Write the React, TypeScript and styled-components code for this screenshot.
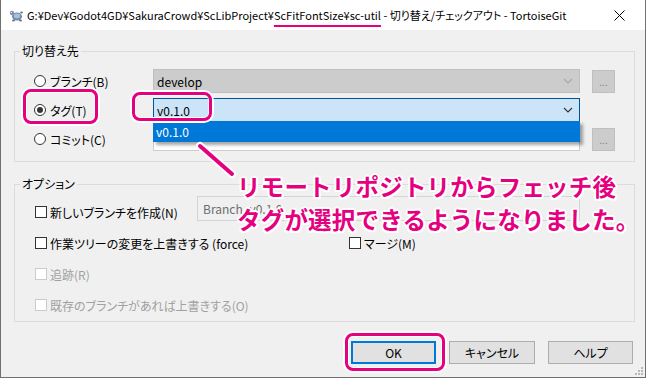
import React from "react";
import styled, { createGlobalStyle } from "styled-components";

const PINK = "#e4007f";

const GlobalStyle = createGlobalStyle`
  html, body {
    margin: 0;
    padding: 0;
    background: #ffffff;
  }
  body {
    font-family: "Noto Sans CJK JP", "Noto Sans", sans-serif;
    font-size: 12px;
    font-feature-settings: "palt";
    color: #000;
  }
`;

const Window = styled.div`
  position: relative;
  width: 646px;
  height: 378px;
  box-sizing: border-box;
  border: 1px solid #707070;
  border-top: none;
  background: #f0f0f0;
  display: flex;
  flex-direction: column;
`;

const TitleBar = styled.div`
  height: 30px;
  flex: none;
  background: #ffffff;
  display: flex;
  align-items: center;
  padding: 0 20px 0 8px;
  & > svg {
    flex: none;
  }
`;

const TitleText = styled.div`
  flex: 1;
  min-width: 0;
  margin-left: 3px;
  font-size: 11px;
  color: #000;
  white-space: nowrap;
`;

const Marked = styled.span`
  text-decoration: underline;
  text-decoration-color: ${PINK};
  text-decoration-thickness: 2px;
  text-underline-offset: 5px;
`;

const Body = styled.div`
  flex: 1;
  display: flex;
  flex-direction: column;
  padding: 13px 10px 0 13px;
`;

const Group = styled.fieldset<{ $gap?: number }>`
  margin: ${(p) => p.$gap ?? 0}px 0 0 0;
  padding: 0;
  border: 1px solid #dcdcdc;
  min-width: 0;
`;

const Legend = styled.legend`
  margin-left: 5px;
  padding: 0 2px;
  font-size: 12px;
  line-height: 16px;
  color: #000;
`;

const TargetGrid = styled.div`
  display: grid;
  grid-template-columns: 119px 427px 35px;
  grid-auto-rows: 24px;
  row-gap: 5px;
  padding: 10px 0 10px 19px;
  align-items: center;
`;

const Choice = styled.label<{ $disabled?: boolean }>`
  display: flex;
  align-items: center;
  gap: 4px;
  height: 24px;
  white-space: nowrap;
  color: ${(p) => (p.$disabled ? "#a0a0a0" : "#000")};
`;

const RadioMark = styled.span<{ $on?: boolean }>`
  width: 12px;
  height: 12px;
  box-sizing: border-box;
  border: 1px solid #333;
  border-radius: 50%;
  background: #fff;
  display: flex;
  align-items: center;
  justify-content: center;
  &::after {
    content: "";
    width: 6px;
    height: 6px;
    border-radius: 50%;
    background: ${(p) => (p.$on ? "#333" : "transparent")};
  }
`;

const CheckMark = styled.span<{ $disabled?: boolean }>`
  width: 12px;
  height: 12px;
  box-sizing: border-box;
  border: 1px solid ${(p) => (p.$disabled ? "#cccccc" : "#333")};
  background: #fff;
  margin-right: -1px;
`;

const ComboCell = styled.div`
  position: relative;
  height: 100%;
`;

const Combo = styled.div<{ $state: "disabled" | "focus" | "plain" }>`
  height: 100%;
  box-sizing: border-box;
  display: flex;
  align-items: center;
  justify-content: space-between;
  padding: 0 6px 0 3px;
  border: 1px solid
    ${(p) => (p.$state === "focus" ? "#005499" : p.$state === "disabled" ? "#bfbfbf" : "#cccccc")};
  background: ${(p) => (p.$state === "focus" ? "#cce4f7" : p.$state === "disabled" ? "#cccccc" : "#ffffff")};
  color: #000;
`;

const Chevron = ({ color }: { color: string }) => (
  <svg width="10" height="6" viewBox="0 0 10 6">
    <path d="M1 1 L5 5 L9 1" fill="none" stroke={color} strokeWidth="1.1" />
  </svg>
);

const DropList = styled.div`
  position: absolute;
  left: 0;
  right: 0;
  top: 23px;
  height: 21px;
  background: #0078d7;
  color: #fff;
  display: flex;
  align-items: center;
  padding-left: 3px;
  box-shadow: 3px 3px 3px rgba(0, 0, 0, 0.35);
  z-index: 2;
`;

const DotsButton = styled.div`
  margin-left: 12px;
  height: 23px;
  box-sizing: border-box;
  border: 1px solid #bfbfbf;
  background: #cccccc;
  color: #838383;
  font-size: 10px;
  display: flex;
  align-items: center;
  justify-content: center;
`;

const OptionList = styled.div`
  display: flex;
  flex-direction: column;
  gap: 7px;
  padding: 4px 0 4px 20px;
`;

const OptionRow = styled.div`
  display: flex;
  align-items: flex-start;
`;

const OptionCell = styled.div<{ $w?: number; $top?: number }>`
  width: ${(p) => (p.$w ? `${p.$w}px` : "auto")};
  margin-top: ${(p) => p.$top ?? 0}px;
  flex: none;
`;

const BranchField = styled.div`
  width: 383px;
  height: 25px;
  box-sizing: border-box;
  border: 1px solid #d4d4d4;
  background: #f0f0f0;
  color: #6d6d6d;
  display: flex;
  align-items: center;
  padding-left: 5px;
`;

const ButtonBar = styled.div`
  display: flex;
  justify-content: flex-end;
  gap: 13px;
  margin-top: 19px;
  padding-right: 2px;
`;

const DialogButton = styled.div<{ $primary?: boolean; $w: number }>`
  width: ${(p) => p.$w}px;
  height: 23px;
  box-sizing: border-box;
  border: ${(p) => (p.$primary ? "2px solid #0078d7" : "1px solid #adadad")};
  background: #e1e1e1;
  display: flex;
  align-items: center;
  justify-content: center;
  color: #000;
`;

const Highlight = styled.div`
  position: absolute;
  box-sizing: border-box;
  border: 3px solid ${PINK};
  border-radius: 8px;
  box-shadow: 0 0 0 2px #fff, inset 0 0 0 1px #fff;
  z-index: 3;
`;

const Callout = styled.div`
  position: absolute;
  left: 236px;
  top: 170px;
  z-index: 4;
  font-family: "Noto Sans CJK JP", sans-serif;
  font-feature-settings: normal;
  font-weight: 700;
  font-size: 23.5px;
  line-height: 33px;
  letter-spacing: 0.2px;
  color: ${PINK};
  white-space: nowrap;
  text-shadow: 2px 0 0 #fff, -2px 0 0 #fff, 0 2px 0 #fff, 0 -2px 0 #fff, 1.5px 1.5px 0 #fff, -1.5px 1.5px 0 #fff,
    1.5px -1.5px 0 #fff, -1.5px -1.5px 0 #fff;
`;

const Pointer = styled.svg`
  position: absolute;
  left: 190px;
  top: 138px;
  z-index: 4;
`;

const Grip = styled.svg`
  position: absolute;
  right: 2px;
  bottom: 2px;
`;

const TurtleIcon = () => (
  <svg width="15" height="15" viewBox="0 0 15 15">
    <ellipse cx="8" cy="8.5" rx="5" ry="4" fill="#6f8aa6" />
    <ellipse cx="8" cy="8" rx="3.2" ry="2.4" fill="#a9bfd4" />
    <circle cx="3" cy="5" r="2.2" fill="#7d95ae" />
    <circle cx="2.4" cy="4.5" r="0.6" fill="#fff" />
    <ellipse cx="4.5" cy="12.5" rx="1.5" ry="1" fill="#5d7690" />
    <ellipse cx="11.5" cy="12.5" rx="1.5" ry="1" fill="#5d7690" />
    <ellipse cx="12.5" cy="4.5" rx="1.4" ry="1" fill="#5d7690" />
  </svg>
);

const CloseIcon = () => (
  <svg width="11" height="11" viewBox="0 0 11 11">
    <path d="M0.5 0.5 L10.5 10.5 M10.5 0.5 L0.5 10.5" stroke="#000" strokeWidth="1" />
  </svg>
);

export default function App() {
  return (
    <>
      <GlobalStyle />
      <Window>
        <TitleBar>
          <TurtleIcon />
          <TitleText>
            G:¥Dev¥Godot4GD¥SakuraCrowd¥ScLibProject¥<Marked>ScFitFontSize¥sc-util</Marked> - 切り替え/チェックアウト -
            TortoiseGit
          </TitleText>
          <CloseIcon />
        </TitleBar>

        <Body>
          <Group>
            <Legend>切り替え先</Legend>
            <TargetGrid>
              <Choice>
                <RadioMark />
                ブランチ(B)
              </Choice>
              <ComboCell>
                <Combo $state='disabled'>
                  develop
                  <Chevron color='#a6a6a6' />
                </Combo>
              </ComboCell>
              <DotsButton>...</DotsButton>

              <Choice>
                <RadioMark $on />
                タグ(T)
              </Choice>
              <ComboCell>
                <Combo $state='focus'>
                  v0.1.0
                  <Chevron color='#333' />
                </Combo>
                <DropList>v0.1.0</DropList>
              </ComboCell>
              <div />

              <Choice>
                <RadioMark />
                コミット(C)
              </Choice>
              <ComboCell>
                <Combo $state='plain' />
              </ComboCell>
              <DotsButton>...</DotsButton>
            </TargetGrid>
          </Group>

          <Group $gap={14}>
            <Legend>オプション</Legend>
            <OptionList>
              <OptionRow>
                <OptionCell $w={162} $top={4}>
                  <Choice>
                    <CheckMark />
                    新しいブランチを作成(N)
                  </Choice>
                </OptionCell>
                <BranchField>Branch_v0.1.0</BranchField>
              </OptionRow>
              <OptionRow>
                <OptionCell $w={314}>
                  <Choice>
                    <CheckMark />
                    作業ツリーの変更を上書きする (force)
                  </Choice>
                </OptionCell>
                <OptionCell>
                  <Choice>
                    <CheckMark />
                    マージ(M)
                  </Choice>
                </OptionCell>
              </OptionRow>
              <OptionRow>
                <Choice $disabled>
                  <CheckMark $disabled />
                  追跡(R)
                </Choice>
              </OptionRow>
              <OptionRow>
                <Choice $disabled>
                  <CheckMark $disabled />
                  既存のブランチがあれば上書きする(O)
                </Choice>
              </OptionRow>
            </OptionList>
          </Group>

          <ButtonBar>
            <DialogButton $primary $w={85}>
              OK
            </DialogButton>
            <DialogButton $w={86}>キャンセル</DialogButton>
            <DialogButton $w={85}>ヘルプ</DialogButton>
          </ButtonBar>
        </Body>

        <Highlight style={{ left: 22, top: 89, width: 75, height: 35 }} />
        <Highlight style={{ left: 131, top: 92, width: 80, height: 29 }} />
        <Highlight style={{ left: 344, top: 333, width: 100, height: 38 }} />

        <Pointer width="50" height="44" viewBox="0 0 50 44">
          <line x1="9" y1="8" x2="41" y2="36" stroke="#fff" strokeWidth="8" strokeLinecap="round" />
          <line x1="9" y1="8" x2="41" y2="36" stroke={PINK} strokeWidth="4" strokeLinecap="round" />
        </Pointer>

        <Callout>
          リモートリポジトリからフェッチ後
          <br />
          タグが選択できるようになりました。
        </Callout>

        <Grip width="8" height="8" viewBox="0 0 8 8">
          <rect x="6" y="0" width="2" height="2" fill="#b8b8b8" />
          <rect x="3" y="3" width="2" height="2" fill="#b8b8b8" />
          <rect x="6" y="3" width="2" height="2" fill="#b8b8b8" />
          <rect x="0" y="6" width="2" height="2" fill="#b8b8b8" />
          <rect x="3" y="6" width="2" height="2" fill="#b8b8b8" />
          <rect x="6" y="6" width="2" height="2" fill="#b8b8b8" />
        </Grip>
      </Window>
    </>
  );
}
